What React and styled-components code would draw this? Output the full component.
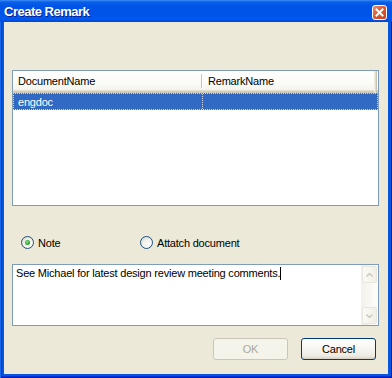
import React from "react";
import styled, { createGlobalStyle } from "styled-components";

const Global = createGlobalStyle`
  html, body { margin: 0; padding: 0; }
  body { width: 392px; height: 378px; overflow: hidden; background: #fff; }
  * { box-sizing: border-box; }
`;

const UI_FONT = `"Liberation Sans", Arial, sans-serif`;

const Window = styled.div`
  width: 392px;
  height: 378px;
  display: flex;
  flex-direction: column;
  background: #0855dd;
  padding: 0 4px 4px 4px;
  box-shadow: inset 1px 0 #166aee, inset -1px 0 #001ea0, inset 0 -1px #001ea0,
    inset 2px 0 #0831d9, inset 0 -2px #0831d9;
  font-family: ${UI_FONT};
  letter-spacing: -0.2px;
`;

const TitleBar = styled.div`
  height: 22px;
  margin: 0 -4px;
  padding: 0 5px 0 4px;
  display: flex;
  align-items: center;
  justify-content: space-between;
  background: linear-gradient(
    to bottom,
    #3d8ef7 0px,
    #0a5ee6 2px,
    #0055e8 6px,
    #0053e6 14px,
    #0059ef 19px,
    #0046d2 22px
  );
`;

const Title = styled.span`
  color: #fff;
  font-family: ${UI_FONT};
  font-weight: bold;
  font-size: 13px;
  letter-spacing: -0.5px;
  text-shadow: 1px 1px #0a1e8a;
  padding-top: 1px;
`;

const CloseButton = styled.div`
  width: 15px;
  height: 15px;
  border: 1px solid #fff;
  border-radius: 3px;
  background: linear-gradient(135deg, #ef8e6c 0%, #de5b32 45%, #c6401b 100%);
  display: flex;
  align-items: center;
  justify-content: center;
  margin-top: 2px;
`;

const Client = styled.div`
  flex: 1;
  background: #ece9d8;
  display: flex;
  flex-direction: column;
  padding: 48px 9px 0 8px;
`;

const ListView = styled.div`
  height: 136px;
  border: 1px solid #7f9db9;
  background: #fff;
  display: flex;
  flex-direction: column;
`;

const HeaderRow = styled.div`
  display: flex;
  height: 22px;
  background: linear-gradient(to bottom, #ffffff 0%, #fafaf6 60%, #f1efe6 100%);
  box-shadow: inset 0 -1px #cbc7b8, inset 0 -2px #d6d2c2, inset 0 -3px #e2decd;
`;

const HeaderCell = styled.div`
  width: ${(p) => p.$w}px;
  flex: none;
  height: 100%;
  padding: 0 0 3px 5px;
  display: flex;
  align-items: center;
  font-size: 11px;
  color: #000;
  position: relative;
  ${(p) =>
    p.$edge &&
    `box-shadow: inset -1px 0 #c8c4b2, inset -2px 0 #e0dccb, inset -3px 0 #eeebdf;`}
  &::after {
    content: "";
    display: ${(p) => (p.$edge ? "none" : "block")};
    position: absolute;
    right: 1px;
    top: 3px;
    bottom: 5px;
    width: 1px;
    background: #c7c5b2;
    box-shadow: 1px 0 #fff;
  }
`;

const Row = styled.div`
  display: flex;
  height: 17px;
  background: ${(p) => (p.$selected ? "#316ac5" : "transparent")};
  color: ${(p) => (p.$selected ? "#fff" : "#000")};
  border: 1px dotted #cfd9ee;
`;

const Cell = styled.div`
  width: ${(p) => p.$w}px;
  flex: none;
  padding-left: 4px;
  font-size: 11px;
  display: flex;
  align-items: center;
  ${(p) => p.$divider && `border-right: 1px dotted #cfd9ee;`}
`;

const RadioRow = styled.div`
  margin-top: 30px;
  height: 13px;
  display: grid;
  grid-template-columns: 119px auto;
  padding-left: 9px;
`;

const RadioOption = styled.label`
  display: flex;
  align-items: center;
  gap: 4px;
  font-size: 11px;
  color: #000;
`;

const RadioCircle = styled.span`
  width: 13px;
  height: 13px;
  border-radius: 50%;
  border: 1px solid #1c5180;
  background: radial-gradient(circle at 65% 70%, #ffffff 0%, #f2f1ec 45%, #d6d3c8 100%);
  display: flex;
  align-items: center;
  justify-content: center;
  flex: none;
  &::after {
    content: "";
    width: 5px;
    height: 5px;
    border-radius: 50%;
    display: ${(p) => (p.$checked ? "block" : "none")};
    background: radial-gradient(circle at 40% 40%, #8fe48f 0%, #27a527 60%, #1a861a 100%);
  }
`;

const TextBox = styled.div`
  margin-top: 15px;
  height: 62px;
  border: 1px solid #7f9db9;
  background: #fff;
  display: flex;
`;

const TextContent = styled.div`
  flex: 1;
  padding: 2px 0 0 3px;
  font-size: 11px;
  color: #000;
  line-height: 13px;
`;

const Caret = styled.span`
  display: inline-block;
  width: 1px;
  height: 13px;
  background: #000;
  vertical-align: top;
`;

const ScrollBar = styled.div`
  width: 17px;
  flex: none;
  display: flex;
  flex-direction: column;
  justify-content: space-between;
  background: linear-gradient(to right, #f3f1ec, #fdfdfa);
  padding: 1px;
`;

const ScrollButton = styled.div`
  height: 17px;
  border: 1px solid #e8e6dd;
  border-radius: 2px;
  background: linear-gradient(to right, #fbfaf6, #f0eee6);
  display: flex;
  align-items: center;
  justify-content: center;
`;

const ButtonRow = styled.div`
  margin-top: 12px;
  display: flex;
  justify-content: flex-end;
  gap: 13px;
  padding-right: 3px;
`;

const Button = styled.button`
  width: 75px;
  height: 22px;
  border-radius: 3px;
  font-family: ${UI_FONT};
  font-size: 11px;
  letter-spacing: -0.2px;
  padding: 0;
  border: 1px solid ${(p) => (p.disabled ? "#c9c7ba" : "#003c74")};
  color: ${(p) => (p.disabled ? "#aca899" : "#000")};
  background: ${(p) =>
    p.disabled
      ? "#f5f4ea"
      : "linear-gradient(to bottom, #ffffff 0%, #f6f5f0 50%, #eceae2 85%, #d6d0c5 100%)"};
`;

const Arrow = ({ up }) => (
  <svg width="7" height="4" viewBox="0 0 7 4">
    <path
      d={up ? "M0.5 3.5 L3.5 0.5 L6.5 3.5" : "M0.5 0.5 L3.5 3.5 L6.5 0.5"}
      fill="none"
      stroke="#c9c7bb"
      strokeWidth="1.4"
    />
  </svg>
);

export default function App() {
  return (
    <>
      <Global />
      <Window>
        <TitleBar>
          <Title>Create Remark</Title>
          <CloseButton>
            <svg width="9" height="9" viewBox="0 0 9 9">
              <path d="M1.5 1.5 L7.5 7.5 M7.5 1.5 L1.5 7.5" stroke="#fff" strokeWidth="2" strokeLinecap="square" />
            </svg>
          </CloseButton>
        </TitleBar>
        <Client>
          <ListView>
            <HeaderRow>
              <HeaderCell $w={190}>DocumentName</HeaderCell>
              <HeaderCell $w={174} $edge>RemarkName</HeaderCell>
            </HeaderRow>
            <Row $selected>
              <Cell $w={189} $divider>engdoc</Cell>
              <Cell $w={175}></Cell>
            </Row>
          </ListView>
          <RadioRow>
            <RadioOption>
              <RadioCircle $checked />
              Note
            </RadioOption>
            <RadioOption>
              <RadioCircle />
              Attatch document
            </RadioOption>
          </RadioRow>
          <TextBox>
            <TextContent>
              See Michael for latest design review meeting comments.
              <Caret />
            </TextContent>
            <ScrollBar>
              <ScrollButton>
                <Arrow up />
              </ScrollButton>
              <ScrollButton>
                <Arrow />
              </ScrollButton>
            </ScrollBar>
          </TextBox>
          <ButtonRow>
            <Button disabled>OK</Button>
            <Button>Cancel</Button>
          </ButtonRow>
        </Client>
      </Window>
    </>
  );
}
